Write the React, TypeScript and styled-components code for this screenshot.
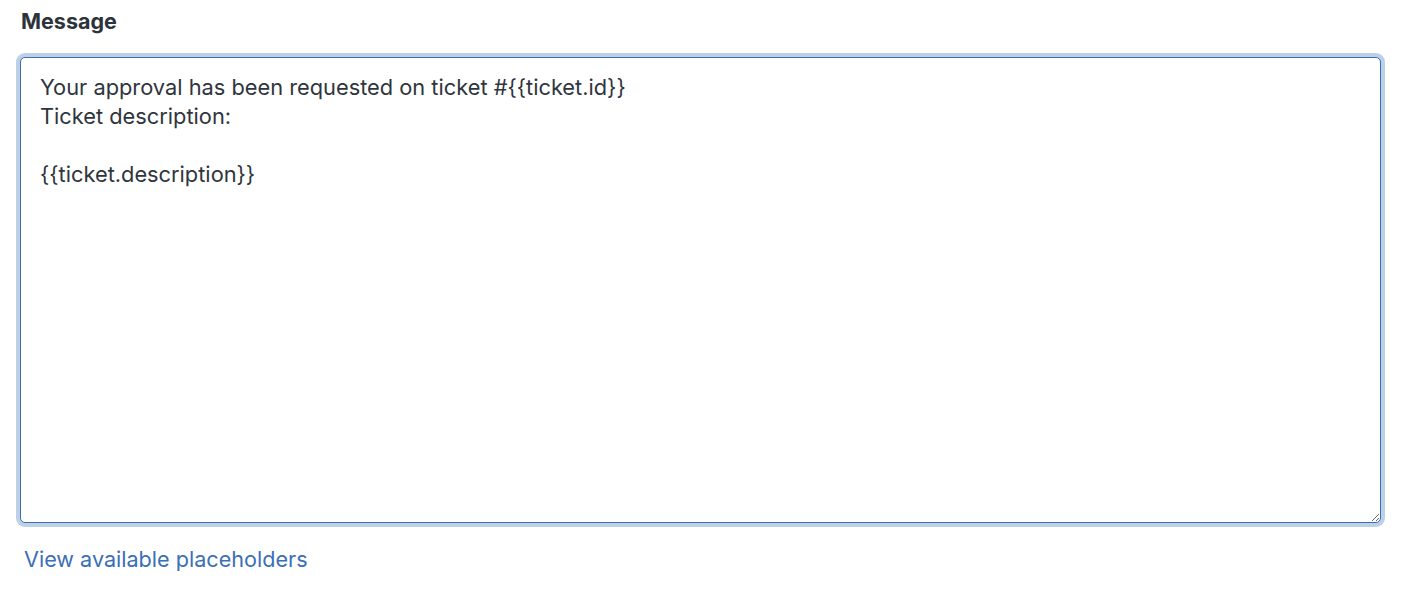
import React from "react";
import styled, { createGlobalStyle } from "styled-components";

const Global = createGlobalStyle`
  html, body { margin: 0; padding: 0; background: #ffffff; }
  body { font-family: Inter, "Liberation Sans", Arial, sans-serif; }
`;

const Wrapper = styled.div`
  padding: 9px 25px 0 20px;
  display: flex;
  flex-direction: column;
`;

const Label = styled.label`
  font-size: 21.5px;
  line-height: 24px;
  font-weight: 700;
  color: #2d333a;
  margin-left: 1px;
  margin-bottom: 24px;
`;

const TextArea = styled.textarea`
  box-sizing: border-box;
  width: 100%;
  height: 466px;
  margin: 0;
  padding: 15px 19px;
  border: 1px solid #3d6eae;
  border-radius: 5px;
  box-shadow: 0 0 0 4px #bcd1e7;
  font-family: Inter, "Liberation Sans", Arial, sans-serif;
  font-size: 21.8px;
  line-height: 29px;
  color: #2f353d;
  background: #ffffff;
  outline: none;
  resize: both;
`;

const Link = styled.a`
  margin-top: 24px;
  margin-left: 4px;
  font-size: 21.6px;
  line-height: 24px;
  color: #3b6fb6;
  text-decoration: none;
  cursor: pointer;
`;

const message = `Your approval has been requested on ticket #{{ticket.id}}
Ticket description:

{{ticket.description}}`;

export default function App() {
  return (
    <>
      <Global />
      <Wrapper>
        <Label htmlFor="message">Message</Label>
        <TextArea id="message" defaultValue={message} spellCheck={false} />
        <Link href="#">View available placeholders</Link>
      </Wrapper>
    </>
  );
}
